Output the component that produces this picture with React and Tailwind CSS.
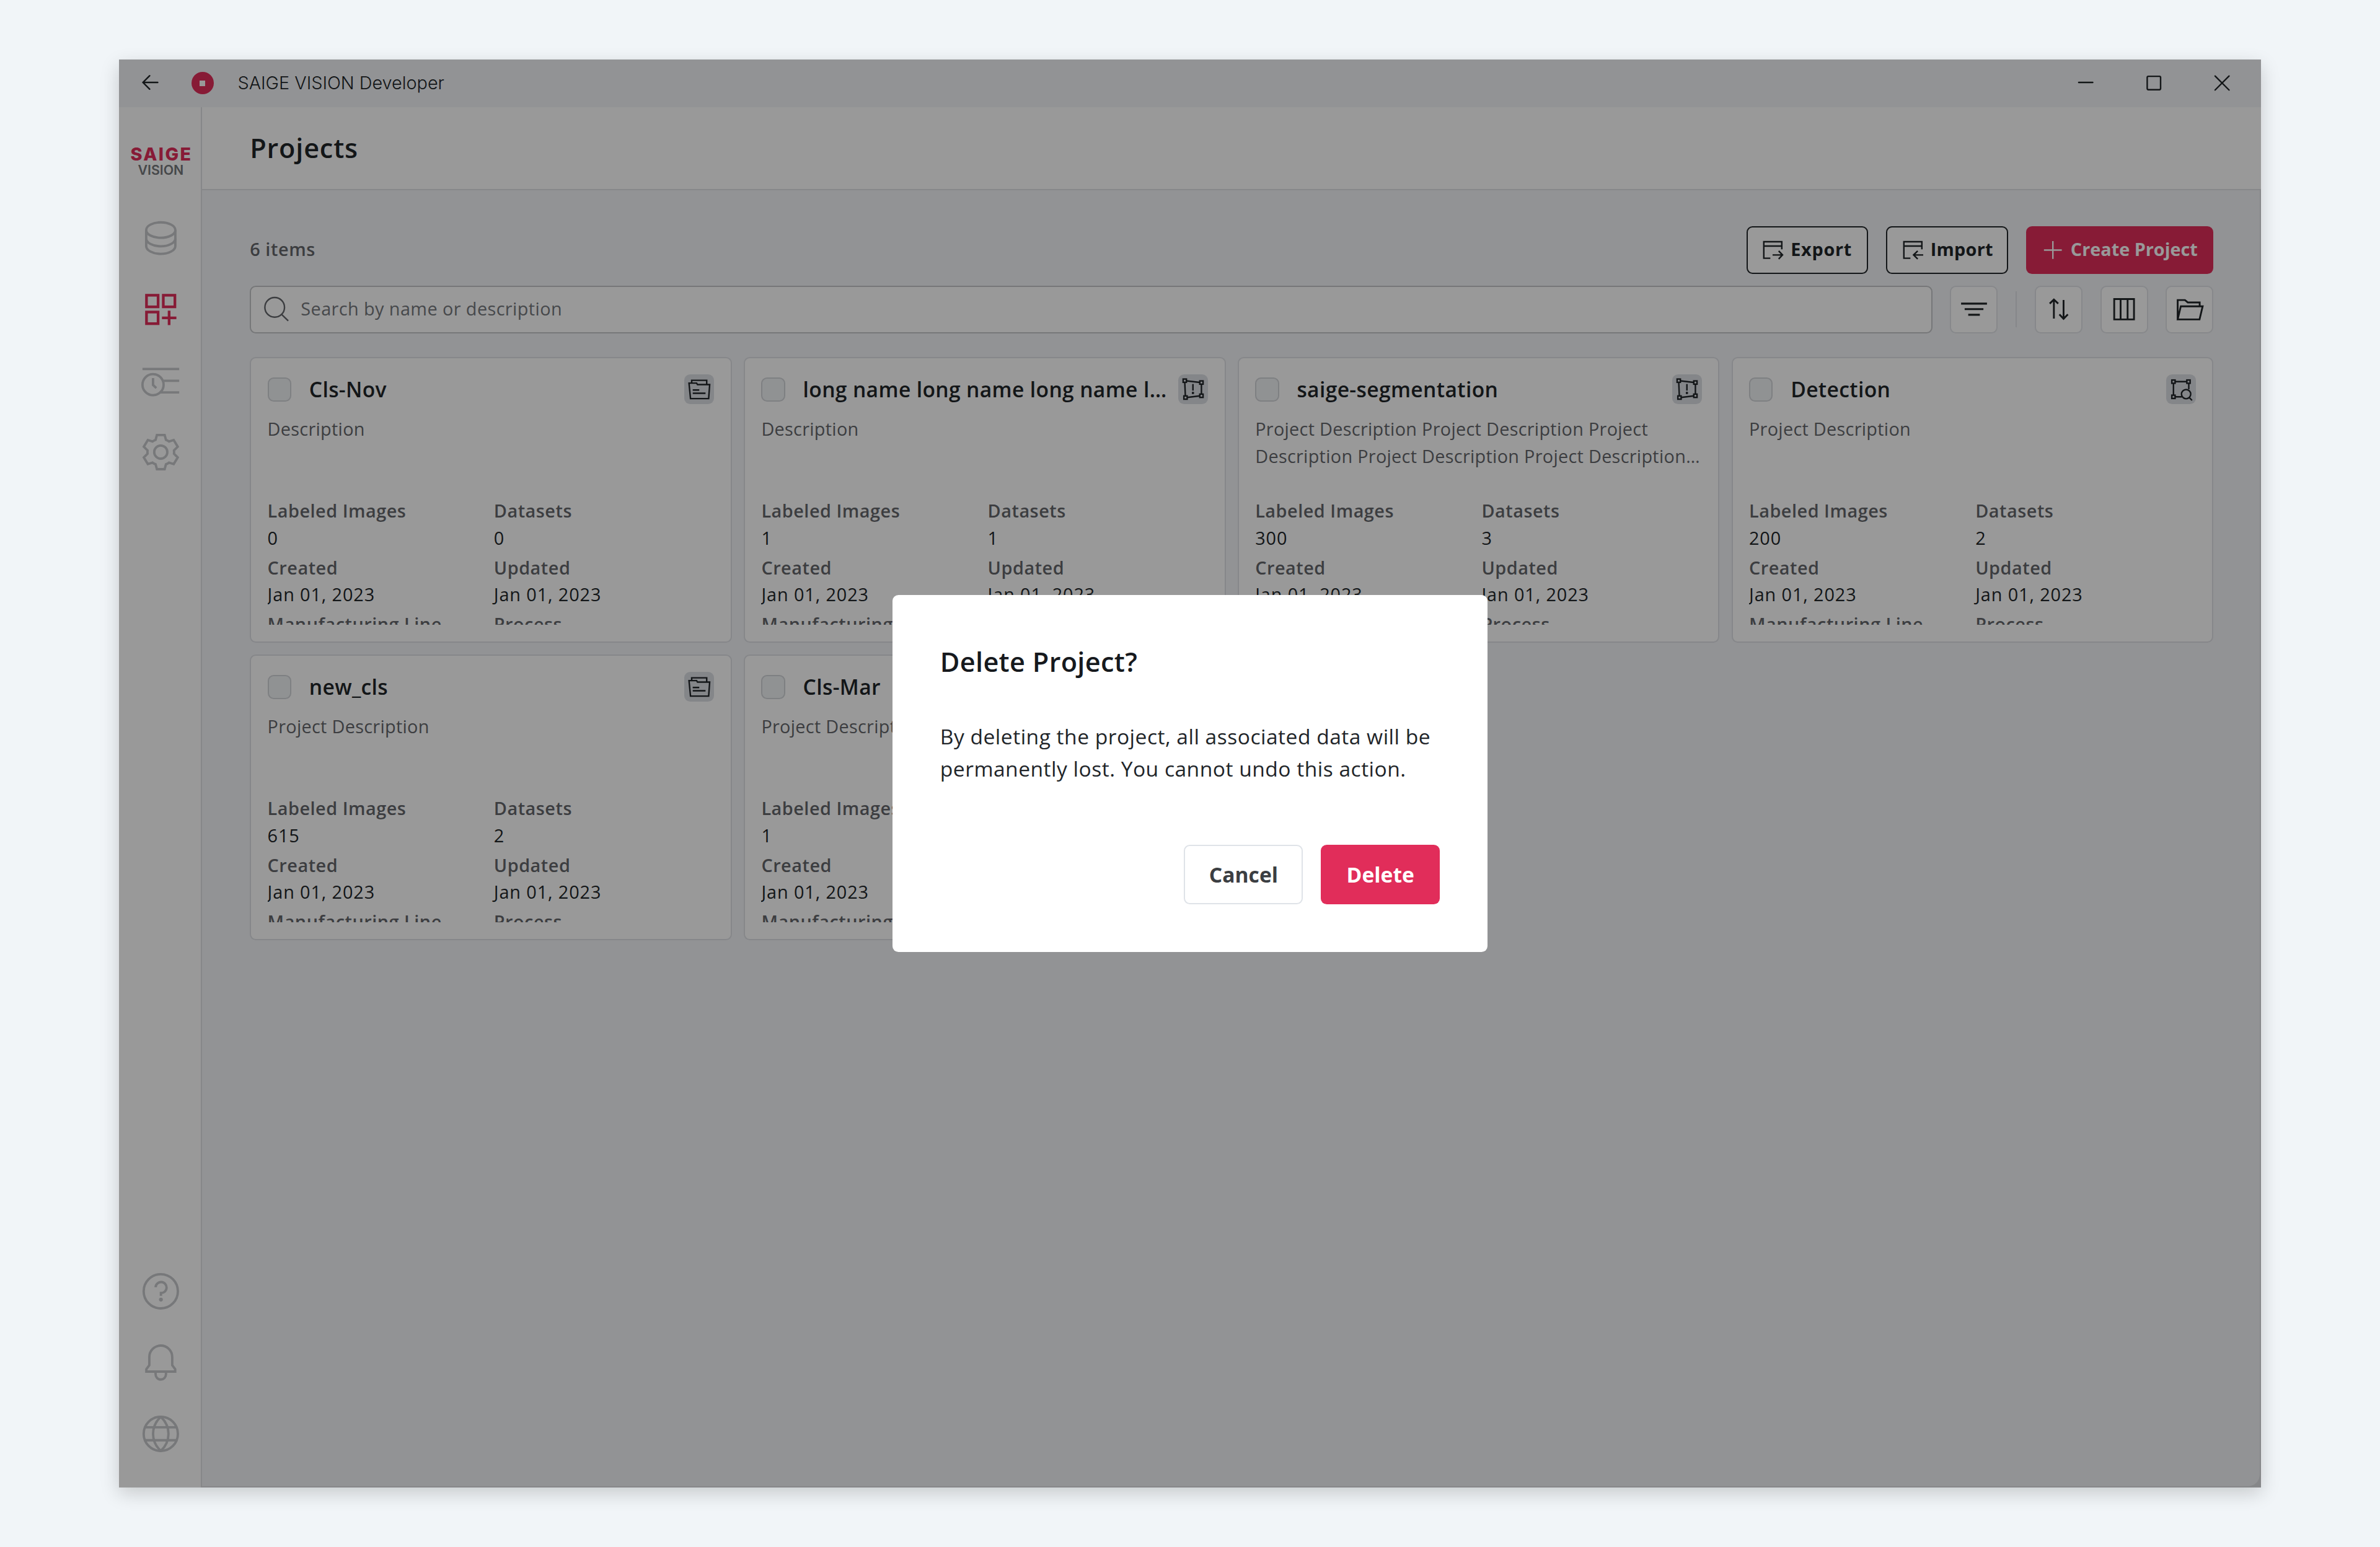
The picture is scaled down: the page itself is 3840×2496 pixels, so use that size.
import { useState } from "react"

const projects = [
  { id: 1, name: "Cls-Nov", type: "cls", description: "Description", images: 0, datasets: 0 },
  { id: 2, name: "long name long name long name long name", type: "seg", description: "Description", images: 1, datasets: 1 },
  {
    id: 3,
    name: "saige-segmentation",
    type: "seg",
    description:
      "Project Description Project Description Project Description Project Description Project Description Project Description",
    images: 300,
    datasets: 3
  },
  { id: 4, name: "Detection", type: "det", description: "Project Description", images: 200, datasets: 2 },
  { id: 5, name: "new_cls", type: "cls", description: "Project Description", images: 615, datasets: 2 },
  { id: 6, name: "Cls-Mar", type: "cls", description: "Project Description", images: 1, datasets: 1 }
]

// Icône centrée sur l'origine
function Icon({ size = 32, stroke = 1.6, className = "", children }) {
  return (
    <svg
      width={size}
      height={size}
      viewBox={`${-size / 2} ${-size / 2} ${size} ${size}`}
      fill="none"
      stroke="currentColor"
      strokeWidth={stroke}
      className={`shrink-0 ${className}`}
    >
      {children}
    </svg>
  )
}

function TypeIcon({ type }) {
  return (
    <div className="size-5 shrink-0 rounded bg-[#dddfe5] text-[#212529]">
      <svg width="20" height="20" viewBox="0 0 20 20" fill="none" stroke="currentColor">
        {type === "cls" && (
          <>
            <path d="M5 6V4H15.1V7" />
            <path d="M3.2 5.9H8.3L8.9 6.9H17.1L16.4 16.3H4.2Z" />
            <path d="M5.7 10.5H10.1M5.7 12.7H14.3" />
          </>
        )}
        {type === "seg" && (
          <>
            <path d="M5.5 4.4L14.5 5.4M15.6 6.6V13.3M14.5 14.5L6 15.5M4.8 14.5L4.4 5.4" />
            <rect x="3.3" y="3.15" width="2.2" height="2.2" />
            <rect x="14.5" y="4.4" width="2.2" height="2.2" />
            <rect x="14.5" y="13.3" width="2.2" height="2.2" />
            <rect x="3.8" y="14.5" width="2.2" height="2.2" />
            <path d="M9.9 6.5V10.9" />
            <circle cx="9.9" cy="12.5" r="0.8" fill="currentColor" stroke="none" />
          </>
        )}
        {type === "det" && (
          <>
            <rect x="3.8" y="3.8" width="2.2" height="2.2" />
            <rect x="13.9" y="3.8" width="2.2" height="2.2" />
            <rect x="3.8" y="14" width="2.2" height="2.2" />
            <path d="M6 4.9H13.9M4.9 6V14M15.2 6V10M6 15.1H10.5" />
            <circle cx="13.4" cy="13.3" r="3.1" />
            <path d="M15.5 15.6L17.4 17.5" />
          </>
        )}
      </svg>
    </div>
  )
}

function Field({ label, value }) {
  return (
    <div>
      <div className="font-semibold tracking-[0.22px] text-[#64676c]">{label}</div>
      <div className="tracking-[0.38px] text-[#212529]">{value}</div>
    </div>
  )
}

function ProjectCard({ project }) {
  return (
    <div className="h-48 min-w-0 rounded border border-[#dfe1e6] bg-white p-[11px]">
      <div className="flex h-full flex-col overflow-hidden text-[12px] leading-[18px]">
        <div className="flex h-5 shrink-0 items-center">
          <div className="mr-3 size-4 shrink-0 rounded border border-[#d3d5d9] bg-[#f1f3f6]" />
          <div className="mr-1.5 flex-1 truncate text-[14px] leading-5 font-semibold tracking-[0.15px] text-[#212529]">
            {project.name}
          </div>
          <TypeIcon type={project.type} />
        </div>
        <div className="mt-[7.5px] mb-[19px] h-9 shrink-0">
          <p className="line-clamp-2 tracking-[0.13px] text-[#64676c]">{project.description}</p>
        </div>
        <div className="grid shrink-0 grid-cols-2 gap-x-1 gap-y-0.5">
          <Field label="Labeled Images" value={project.images} />
          <Field label="Datasets" value={project.datasets} />
          <Field label="Created" value="Jan 01, 2023" />
          <Field label="Updated" value="Jan 01, 2023" />
          <Field label="Manufacturing Line" />
          <Field label="Process" />
        </div>
      </div>
    </div>
  )
}

function ToolButton({ children }) {
  return (
    <button className="flex size-8 shrink-0 items-center justify-center rounded border border-[#e1e3e8] bg-white text-[#212529]">
      {children}
    </button>
  )
}

function TitleBar() {
  return (
    <div className="flex h-8 shrink-0 items-center bg-[#f4f6f8] text-[#212529]">
      <Icon size={16} stroke={1} className="ml-[13px]">
        <path d="M5.1 -0.5H-4.6M-0.3 -5L-4.8 -0.5L-0.3 4" strokeLinecap="round" />
      </Icon>
      <div className="ml-[19.6px] flex size-[15px] items-center justify-center rounded-full bg-[#e12d5a]">
        <div className="size-1 bg-white" />
      </div>
      <div className="ml-[16.2px] font-[Inter] text-[12px] leading-4 font-light">SAIGE VISION Developer</div>
      <div className="mr-[3px] ml-auto flex">
        <div className="flex w-[46px] justify-center">
          <Icon size={16} stroke={1}>
            <path d="M-4.7 -0.5H4.7" strokeLinecap="round" />
          </Icon>
        </div>
        <div className="flex w-[46px] justify-center">
          <Icon size={16} stroke={1}>
            <rect x="-4.5" y="-4.6" width="9" height="9" rx="0.8" />
          </Icon>
        </div>
        <div className="flex w-[46px] justify-center">
          <Icon size={16} stroke={1}>
            <path d="M-4.7 -4.8L4.7 4.6M4.7 -4.8L-4.7 4.6" strokeLinecap="round" />
          </Icon>
        </div>
      </div>
    </div>
  )
}

function Sidebar() {
  return (
    <div className="flex w-14 shrink-0 flex-col items-center border-r border-[#dfe1e5] bg-white pb-5 pl-px text-[#c6c8cb]">
      <div className="mt-[26px] flex h-[46px] flex-col items-center font-[Inter]">
        <div className="pl-[0.9px] text-[12px] leading-[11.8px] font-extrabold tracking-[1px] text-[#e12d5a]">SAIGE</div>
        <div className="text-[8.9px] leading-[9px] font-semibold text-[#75787c]">VISION</div>
      </div>
      <div className="flex flex-col gap-4">
        <Icon>
          <ellipse cx="0" cy="-5.5" rx="9.8" ry="5.2" />
          <path d="M-9.8 -5.5V5.2C-9.8 8.1 -5.4 10.5 0 10.5S9.8 8.1 9.8 5.2V-5.5" />
          <path d="M-9.8 0.1C-9.8 3 -5.4 5.4 0 5.4S9.8 3 9.8 0.1" />
        </Icon>
        <Icon stroke={1.8} className="text-[#e12d5a]">
          <rect x="-9.6" y="-9.6" width="7.8" height="7.8" />
          <rect x="1.7" y="-9.6" width="7.8" height="7.8" />
          <rect x="-9.6" y="1.7" width="7.8" height="7.8" />
          <path d="M0.8 5.6H10.5M5.6 0.8V10.5" />
        </Icon>
        <Icon>
          <path d="M-12.3 -7.9H12.4M2 0H12.4M-0.8 7.8H12.4" />
          <circle cx="-5.2" cy="2.6" r="7.1" />
          <path d="M-5.2 -1.8V2.8L-3 4.9" />
        </Icon>
        <Icon>
          <path d="M-2.6 -11.5H2.6L3.5 -8.2Q4.6 -7.8 5.5 -7.1L8.7 -8.1L11.4 -3.6L8.9 -1.1Q9 0 8.9 1.1L11.4 3.6L8.7 8.1L5.5 7.1Q4.6 7.8 3.5 8.2L2.6 11.5H-2.6L-3.5 8.2Q-4.6 7.8 -5.5 7.1L-8.7 8.1L-11.4 3.6L-8.9 1.1Q-9 0 -8.9 -1.1L-11.4 -3.6L-8.7 -8.1L-5.5 -7.1Q-4.6 -7.8 -3.5 -8.2Z" />
          <circle r="4.4" />
        </Icon>
      </div>
      <div className="mt-auto flex flex-col gap-4">
        <Icon>
          <circle r="11.5" />
          <path d="M-3.5 -2.7A3.7 3.7 0 1 1 0.1 1.2V3.1" />
          <circle cx="0.1" cy="5.6" r="1.3" fill="currentColor" stroke="none" />
        </Icon>
        <Icon>
          <path d="M-7.7 1.8V-3.7A7.7 7.7 0 0 1 7.7 -3.7V1.8L9.7 4.5V6.1H-9.7V4.5Z" />
          <path d="M-3.5 6.1V7.9A3.5 3.5 0 0 0 3.5 7.9V6.1" />
        </Icon>
        <Icon>
          <circle r="11.5" />
          <path d="M-10.6 -4.4H10.6M-10.6 4.3H10.6M0 -11.5C-6.9 -5 -6.9 5 0 11.5M0 -11.5C6.9 -5 6.9 5 0 11.5" />
        </Icon>
      </div>
    </div>
  )
}

function Toolbar() {
  return (
    <>
      <div className="flex items-center">
        <div className="pb-[1.5px] text-[12px] font-semibold tracking-[0.25px] text-[#64676c]">6 items</div>
        <div className="ml-auto flex gap-3 text-[12px] font-bold">
          <button className="flex h-8 w-[82px] items-center gap-1 rounded border border-[#212529] bg-white pl-[9px] text-[#212529]">
            <svg width="16" height="16" viewBox="0 0 16 16" fill="none" stroke="currentColor">
              <path d="M6.4 13.6H2V2.5H14.1V7.6M2 5.4H14.1M7.9 11.4H14.4M12 8.7L14.6 11.4L12 14.1" />
            </svg>
            <span className="pb-[1.5px] tracking-[0.3px]">Export</span>
          </button>
          <button className="flex h-8 w-[82px] items-center gap-1 rounded border border-[#212529] bg-white pl-[9px] text-[#212529]">
            <svg width="16" height="16" viewBox="0 0 16 16" fill="none" stroke="currentColor">
              <path d="M6.4 13.6H2V2.5H14.1V7.6M2 5.4H14.1M8.6 11.4H15M11.3 8.7L8.5 11.4L11.3 14.1" />
            </svg>
            <span className="pb-[1.5px] tracking-[0.1px]">Import</span>
          </button>
          <button className="flex h-8 w-[126px] items-center gap-1 rounded bg-[#e12d5a] pl-2.5 text-white">
            <svg width="16" height="16" viewBox="0 0 16 16" fill="none" stroke="currentColor">
              <path d="M2 8.1H14M8 2.1V14.1" />
            </svg>
            <span className="pb-[1.5px]">Create Project</span>
          </button>
        </div>
      </div>

      <div className="mt-2 flex items-center gap-3">
        <div className="flex h-8 flex-1 items-center rounded border border-[#c5c7ca] bg-white pl-2 text-[12px] text-[#75787d]">
          <Icon size={20} stroke={1} className="mr-[5.4px] text-[#64676c]">
            <circle cx="-2" cy="-1.3" r="6.6" />
            <path d="M2.7 3.5L7.1 7.8" />
          </Icon>
          <span className="pb-[1.5px] tracking-[0.18px]">Search by name or description</span>
        </div>
        <ToolButton>
          <Icon size={20} stroke={1.3}>
            <path d="M-8.7 -3.8H8.7M-6.3 -0.1H6.3M-3.9 3.7H3.9" />
          </Icon>
        </ToolButton>
        <div className="h-6 w-px bg-[#dfe1e6]" />
        <ToolButton>
          <Icon size={20} stroke={1.2}>
            <path d="M-3.4 6.2V-6.2M-6.2 -3.8L-3.4 -6.6L-0.5 -3.8M3.1 -6.2V6.2M0.3 3.4L3.1 6.4L6 3.4" />
          </Icon>
        </ToolButton>
        <ToolButton>
          <Icon size={20} stroke={1.2}>
            <path d="M-6.6 -6.9H6.7V6.8H-6.6ZM-2.3 -6.9V6.8M2.4 -6.9V6.8" />
          </Icon>
        </ToolButton>
        <ToolButton>
          <Icon size={20} stroke={1.2}>
            <path d="M-8.1 6.8V-6.2H-3.2L-1.3 -4.6H6.7V-2.2M-8.1 6.8L-6 -2H8.7L6.6 6.8Z" />
          </Icon>
        </ToolButton>
      </div>
    </>
  )
}

function DeleteDialog({ onClose }) {
  return (
    <div className="flex h-60 w-[400px] flex-col rounded bg-white p-8">
      <h2 className="text-[18px] leading-[26px] font-semibold tracking-[0.14px] text-[#16191d]">Delete Project?</h2>
      <p className="mt-[26px] text-[14px] leading-[22px] tracking-[0.2px] text-[#212529]">
        By deleting the project, all associated data will be permanently lost. You cannot undo this action.
      </p>
      <div className="mt-auto flex justify-end gap-3 text-[14px] font-bold">
        <button className="h-10 w-20 rounded border border-[#dfe3e8] text-[#3b3e42]" onClick={onClose}>
          Cancel
        </button>
        <button className="h-10 w-20 rounded bg-[#e12d5a] text-white" onClick={onClose}>
          Delete
        </button>
      </div>
    </div>
  )
}

export default function App() {
  const [open, setOpen] = useState(true)

  return (
    <div className="h-[1040px] w-[1600px] overflow-hidden bg-[#f1f5f8] px-20 py-10 font-['Open_Sans',sans-serif] [zoom:2.4]">
      <div className="relative flex h-[960px] flex-col shadow-[0_4px_12px_rgba(0,0,0,0.18)]">
        <TitleBar />
        <div className="flex min-h-0 flex-1">
          <Sidebar />
          <div className="flex min-w-0 flex-1 flex-col">
            <div className="flex h-14 shrink-0 items-center border-b border-[#dfe1e5] bg-white px-8">
              <h1 className="text-[18px] font-semibold tracking-[0.35px] text-[#212529]">Projects</h1>
            </div>
            <div className="flex-1 bg-[#dfe1e5] pr-px pb-px">
              <div className="h-full rounded-br-lg bg-[#f4f6f8] pt-6 pr-[31px] pl-8">
                <Toolbar />
                {/* Liste des projets */}
                <div className="mt-4 grid grid-cols-4 gap-2">
                  {projects.map((project) => (
                    <ProjectCard key={project.id} project={project} />
                  ))}
                </div>
              </div>
            </div>
          </div>
        </div>

        {/* Confirmation */}
        {open && (
          <div className="absolute inset-0 flex items-center justify-center bg-black/40">
            <DeleteDialog onClose={() => setOpen(false)} />
          </div>
        )}
      </div>
    </div>
  )
}
